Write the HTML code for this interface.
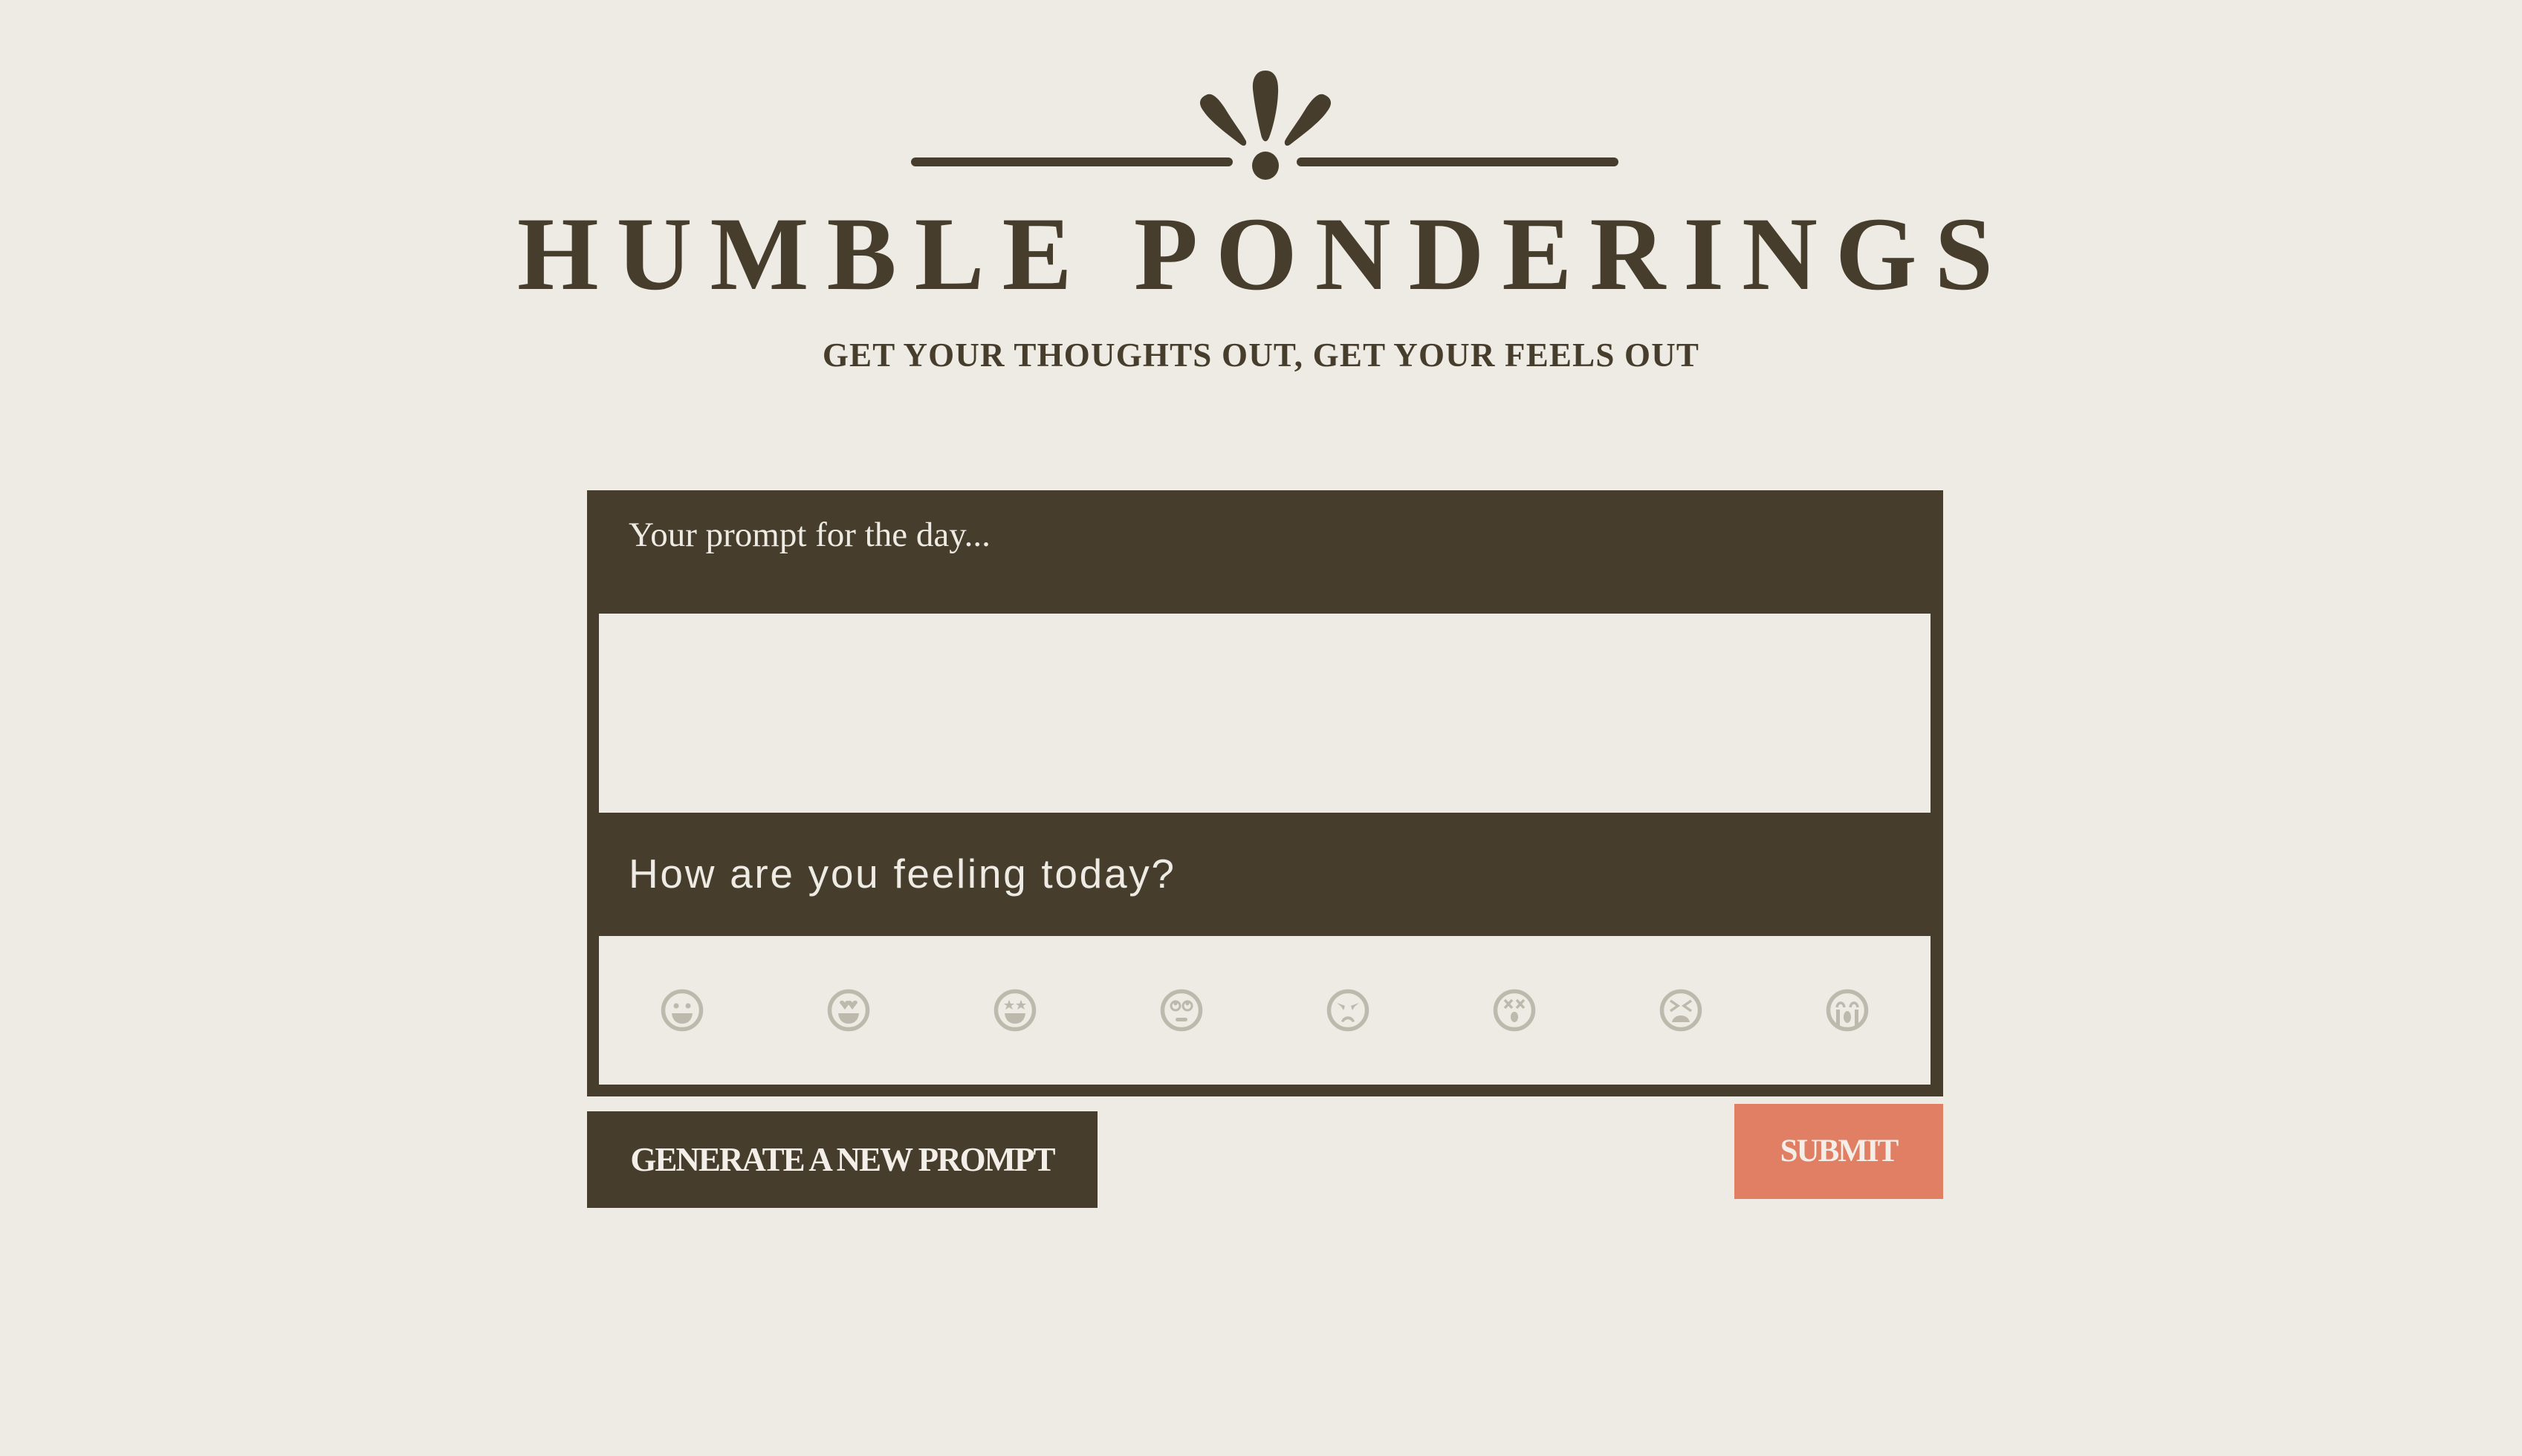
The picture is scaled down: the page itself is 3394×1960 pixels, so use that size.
<!DOCTYPE html>
<html><head><meta charset="utf-8"><style>
html,body{margin:0;padding:0;width:3394px;height:1960px;background:#eeebe4;overflow:hidden;position:relative}
.a{position:absolute}
.dark{background:#463d2c}
.serif{font-family:"Liberation Serif",serif}
</style></head><body>
<svg class="a" style="left:0;top:0" width="3394" height="260">
<g fill="#463d2c">
<rect x="1226" y="212" width="433" height="12" rx="6"/>
<rect x="1745" y="212" width="433" height="12" rx="6"/>
<ellipse cx="1703" cy="223" rx="18" ry="19"/>
<path d="M1703 95 C1715 95 1721 105 1720 125 C1719 150 1712 175 1708 185 C1705 192 1701 192 1698 185 C1694 170 1688 140 1686 120 C1685 105 1691 95 1703 95Z"/>
<path d="M1623 128 C1630 124 1638 130 1648 145 C1660 165 1672 180 1677 190 C1678 196 1674 198 1669 194 C1655 183 1630 165 1620 150 C1612 140 1614 132 1623 128Z"/>
<path d="M1783 128 C1776 124 1768 130 1758 145 C1746 165 1734 180 1729 190 C1728 196 1732 198 1737 194 C1751 183 1776 165 1786 150 C1794 140 1792 132 1783 128Z"/>
</g></svg>
<div class="a serif" style="left:0;width:3394px;top:262px;text-align:center;font-size:141px;font-weight:bold;color:#463d2c;letter-spacing:24px;text-indent:8px;line-height:160px">HUMBLE PONDERINGS</div>
<div class="a serif" style="left:0;width:3394px;top:448px;text-align:center;font-size:45px;font-weight:bold;color:#463d2c;letter-spacing:1.2px;line-height:60px">GET YOUR THOUGHTS OUT, GET YOUR FEELS OUT</div>

<div class="a dark" style="left:790px;top:660px;width:1825px;height:816px"></div>
<div class="a serif" style="left:846px;top:690px;font-size:47px;color:#eeebe4;line-height:60px">Your prompt for the day...</div>
<div class="a" style="left:806px;top:826px;width:1792px;height:268px;background:#eeebe4"></div>
<div class="a" style="left:846px;top:1143px;font-family:'Liberation Sans',sans-serif;font-size:55px;letter-spacing:2.7px;color:#eeebe4;line-height:66px">How are you feeling today?</div>
<div class="a" style="left:806px;top:1260px;width:1792px;height:200px;background:#eeebe4"></div>

<svg class="a" style="left:0;top:1320px" width="3394" height="80">
<defs><g id="f"><circle cx="0" cy="0" r="25.5" fill="none" stroke="#bdb9ad" stroke-width="5.5"/></g></defs>
<g fill="#bdb9ad" stroke="none">
<g transform="translate(918,40)"><use href="#f"/><circle cx="-8" cy="-6" r="3.5"/><circle cx="8" cy="-6" r="3.5"/><path d="M-14 4 H14 C13 14 7 18 0 18 C-7 18 -13 14 -14 4Z"/></g>
<g transform="translate(1142,40)"><use href="#f"/><path d="M-13 -10 C-13 -14 -7 -14 -6 -10 C-5 -14 1 -14 0 -9 L-6 -1Z" transform="translate(1,0)"/><path d="M13 -10 C13 -14 7 -14 6 -10 C5 -14 -1 -14 0 -9 L6 -1Z" transform="translate(-1,0)"/><path d="M-14 4 H14 C13 14 7 18 0 18 C-7 18 -13 14 -14 4Z"/></g>
<g transform="translate(1366,40)"><use href="#f"/><path d="M-8 -14 L-6 -9 L-1 -9 L-5 -6 L-3 -1 L-8 -4 L-13 -1 L-11 -6 L-15 -9 L-10 -9Z"/><path d="M8 -14 L10 -9 L15 -9 L11 -6 L13 -1 L8 -4 L3 -1 L5 -6 L1 -9 L6 -9Z"/><path d="M-14 4 H14 C13 14 7 18 0 18 C-7 18 -13 14 -14 4Z"/></g>
<g transform="translate(1590,40)"><use href="#f"/><circle cx="-8" cy="-6" r="6" fill="none" stroke="#bdb9ad" stroke-width="3"/><circle cx="8" cy="-6" r="6" fill="none" stroke="#bdb9ad" stroke-width="3"/><circle cx="-8" cy="-9" r="2.5"/><circle cx="8" cy="-9" r="2.5"/><rect x="-8" y="10" width="16" height="5" rx="2.5"/></g>
<g transform="translate(1814,40)"><use href="#f"/><path d="M-15 -10 L-4 -6 L-6 0 L-9 -5Z"/><path d="M15 -10 L4 -6 L6 0 L9 -5Z"/><path d="M-9 15 C-6 6 6 6 9 15 L6 16 C3 11 -3 11 -6 16Z"/></g>
<g transform="translate(2038,40)"><use href="#f"/><path d="M-13 -14 L-3 -3 M-3 -14 L-13 -3 M3 -14 L13 -3 M13 -14 L3 -3" stroke="#bdb9ad" stroke-width="3.5"/><ellipse cx="0" cy="9" rx="5" ry="7"/></g>
<g transform="translate(2262,40)"><use href="#f"/><path d="M-14 -13 L-4 -6 L-14 1" fill="none" stroke="#bdb9ad" stroke-width="3.5"/><path d="M14 -13 L4 -6 L14 1" fill="none" stroke="#bdb9ad" stroke-width="3.5"/><path d="M-12 16 C-10 4 10 4 12 16Z"/></g>
<g transform="translate(2486,40)"><use href="#f"/><path d="M-14 -4 C-13 -12 -5 -12 -4 -4 M4 -4 C5 -12 13 -12 14 -4" fill="none" stroke="#bdb9ad" stroke-width="3.5"/><rect x="-15" y="-1" width="5" height="22"/><rect x="10" y="-1" width="5" height="22"/><ellipse cx="0" cy="9" rx="5" ry="8"/></g>
</g></svg>

<div class="a dark serif" style="left:790px;top:1496px;width:687px;height:130px;color:#f3efe8;font-size:45px;font-weight:bold;text-align:center;line-height:130px;letter-spacing:-2px">GENERATE A NEW PROMPT</div>
<div class="a serif" style="left:2334px;top:1486px;width:281px;height:128px;background:#e07f63;color:#f3efe8;font-size:43px;font-weight:bold;text-align:center;line-height:128px;letter-spacing:-2px">SUBMIT</div>
</body></html>
